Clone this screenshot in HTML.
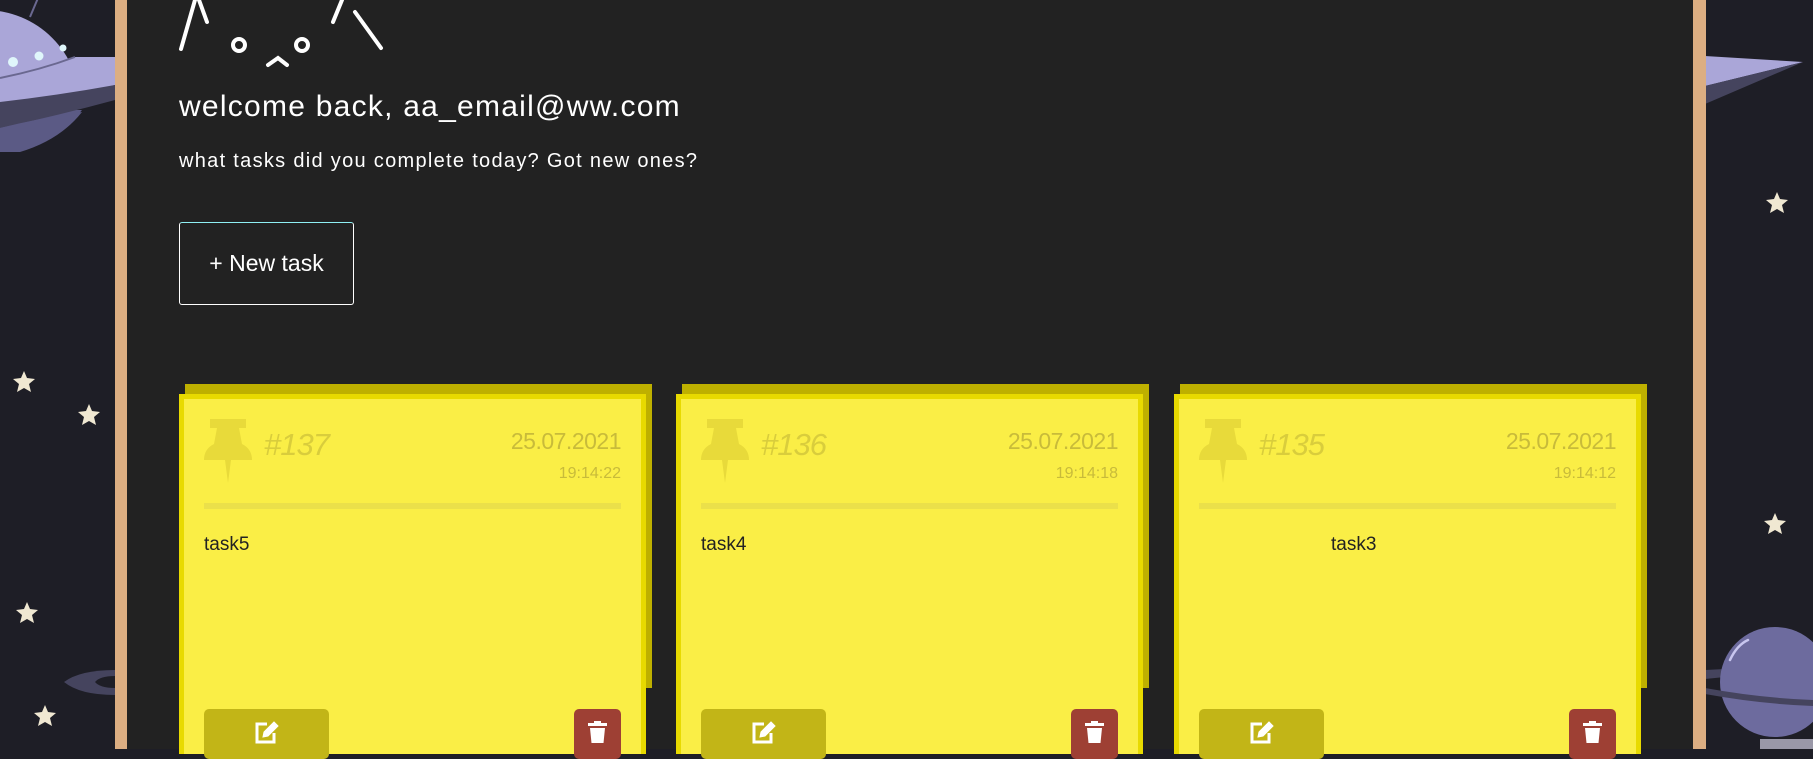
<!DOCTYPE html>
<html><head><meta charset="utf-8">
<style>
*{margin:0;padding:0;box-sizing:border-box}
html,body{width:1813px;height:749px;overflow:hidden;background:#1e1e26;font-family:"Liberation Sans",sans-serif}
.abs{position:absolute}
.main{position:absolute;left:115px;top:0;width:1591px;height:749px;background:#222222;border-left:12px solid #dcae82;border-right:13px solid #dcae82}
.card{position:absolute;top:394px;width:467px;height:360px;background:#faee46;border:5px solid #e8da00;border-bottom:none}
.back{position:absolute;top:384px;width:467px;height:304px;background:#beb000}
.num{position:absolute;left:80px;top:28px;font-size:31px;font-style:italic;color:#d9cd3c;letter-spacing:-1px}
.date{position:absolute;right:20px;top:29px;font-size:23px;color:#c8bb3a;letter-spacing:-0.5px}
.time{position:absolute;right:20px;top:66px;font-size:16px;color:#c8bb3a}
.div{position:absolute;left:20px;right:20px;top:104px;height:6px;background:#ebe04a}
.txt{position:absolute;top:135px;font-size:19px;color:#222}
.edit{position:absolute;left:20px;top:310px;width:125px;height:50px;background:#c2b517;border-radius:5px}
.del{position:absolute;right:20px;top:310px;width:47px;height:50px;background:#9e4034;border-radius:5px}
</style></head><body>
<svg class="abs" style="left:0;top:0" width="1813" height="749">
<defs><clipPath id="top"><rect x="-50" y="-10" width="200" height="95"/></clipPath></defs>
<!-- UFO -->
<line x1="30" y1="17" x2="38" y2="-2" stroke="#6a6890" stroke-width="2"/>
<path d="M0 150 Q60 140 82 110 L0 110 Z" fill="#5b5a85"/>
<circle cx="-15" cy="105" r="95" fill="#aaa6d8" clip-path="url(#top)"/>
<path d="M-10 80 L75 57 L115 57 L115 85 Q60 100 0 112 Z" fill="#aaa6d8"/>
<path d="M0 78 Q40 70 75 57" stroke="#6a6890" stroke-width="2" fill="none"/>
<circle cx="13" cy="62" r="5" fill="#dff6fb"/><circle cx="39" cy="56" r="4.5" fill="#dff6fb"/><circle cx="63" cy="48" r="3.5" fill="#dff6fb"/>
<path d="M0 102 Q60 95 115 85 L115 100 Q60 115 0 128 Z" fill="#45445e"/>
<path d="M0 128 Q40 118 82 112 Q60 140 20 152 L0 152 Z" fill="#5b5a85"/>
<!-- left stars / ring -->
<g fill="#f0e8d2">
<polygon points="24,371 27,378 35,379 29,384 31,392 24,388 17,392 19,384 13,379 21,378"/>
<polygon points="89,404 92,411 100,412 94,417 96,425 89,421 82,425 84,417 78,412 86,411"/>
<polygon points="27,602 30,609 38,610 32,615 34,623 27,619 20,623 22,615 16,610 24,609"/>
<polygon points="45,705 48,712 56,713 50,718 52,726 45,722 38,726 40,718 34,713 42,712"/>
<polygon points="1777,192 1780,199 1788,200 1782,205 1784,213 1777,209 1770,213 1772,205 1766,200 1774,199"/>
<polygon points="1775,513 1778,520 1786,521 1780,526 1782,534 1775,530 1768,534 1770,526 1764,521 1772,520"/>
</g>
<path d="M64 682 Q80 670 115 670 L115 695 Q80 695 64 682 Z" fill="#45445e"/>
<path d="M95 682 Q100 676 115 676 L115 688 Q100 688 95 682 Z" fill="#1e1e26"/>
<!-- right cone -->
<polygon points="1705,56 1803,62 1705,86" fill="#aaa6d8"/>
<polygon points="1705,86 1803,62 1705,104" fill="#45445e"/>
<!-- planet -->
<path d="M1705 670 L1725 669 L1725 677 L1705 679 Z" fill="#45445e"/>
<circle cx="1775" cy="682" r="55" fill="#6d6b9e"/>
<path d="M1705 688 Q1760 698 1813 700 L1813 706 Q1760 704 1705 694 Z" fill="#45445e"/>
<path d="M1730 660 Q1737 645 1748 640" stroke="#c8c6ef" stroke-width="2.5" fill="none" stroke-linecap="round"/>
<rect x="1760" y="739" width="53" height="10" fill="#9a98a8"/>
</svg>
<div class="main"></div>
<svg class="abs" style="left:170px;top:0" width="240" height="110" fill="none" stroke="#fff" stroke-width="4" stroke-linecap="round">
<line x1="11" y1="49" x2="25" y2="0"/><line x1="29" y1="0" x2="37" y2="22"/>
<line x1="163" y1="22" x2="172" y2="0"/><line x1="185" y1="12" x2="211" y2="48"/>
<circle cx="69" cy="45" r="6"/><circle cx="132" cy="45" r="6"/>
<path d="M98 65 L108 58 L117 65"/>
</svg>
<div class="abs" style="left:179px;top:92px;font-size:30px;line-height:1;color:#fff;letter-spacing:1.25px;white-space:nowrap">welcome back, aa_email@ww.com</div>
<div class="abs" style="left:179px;top:151px;font-size:20px;line-height:1;color:#fff;letter-spacing:1.3px;white-space:nowrap">what tasks did you complete today? Got new ones?</div>
<div class="abs" style="left:179px;top:222px;width:175px;height:83px;border:1px solid #fff;border-top:1.5px solid #8ff0f4;border-radius:3px;color:#fff;font-size:23px;line-height:80px;text-align:center">+ New task</div>

<div class="back" style="left:185px"></div>
<div class="back" style="left:682px"></div>
<div class="back" style="left:1180px"></div>

<div class="card" style="left:179px">
<svg class="abs" style="left:20px;top:20px" width="48" height="64"><path d="M6 0 H42 V9 H35 L38 25 Q48 30 48 41 H27 L24 64 L21 41 H0 Q0 30 10 25 L13 9 H6 Z" fill="#e8da3a"/></svg>
<div class="num">#137</div><div class="date">25.07.2021</div><div class="time">19:14:22</div>
<div class="div"></div><div class="txt" style="left:20px">task5</div>
<div class="edit"><svg class="abs" style="left:50px;top:12px" width="26" height="24" fill="none" stroke="#fff" stroke-width="3"><path d="M13 3 H3 V21 H20 V12"/><path d="M9 16 L10 11 L20 1 L24 5 L14 15 Z" fill="#fff" stroke-width="1"/></svg></div>
<div class="del"><svg class="abs" style="left:14px;top:12px" width="19" height="22" fill="#fff"><rect x="0" y="2" width="19" height="3"/><rect x="6" y="0" width="7" height="3"/><path d="M2 7 H17 L15.5 22 H3.5 Z"/></svg></div>
</div>

<div class="card" style="left:676px">
<svg class="abs" style="left:20px;top:20px" width="48" height="64"><path d="M6 0 H42 V9 H35 L38 25 Q48 30 48 41 H27 L24 64 L21 41 H0 Q0 30 10 25 L13 9 H6 Z" fill="#e8da3a"/></svg>
<div class="num">#136</div><div class="date">25.07.2021</div><div class="time">19:14:18</div>
<div class="div"></div><div class="txt" style="left:20px">task4</div>
<div class="edit"><svg class="abs" style="left:50px;top:12px" width="26" height="24" fill="none" stroke="#fff" stroke-width="3"><path d="M13 3 H3 V21 H20 V12"/><path d="M9 16 L10 11 L20 1 L24 5 L14 15 Z" fill="#fff" stroke-width="1"/></svg></div>
<div class="del"><svg class="abs" style="left:14px;top:12px" width="19" height="22" fill="#fff"><rect x="0" y="2" width="19" height="3"/><rect x="6" y="0" width="7" height="3"/><path d="M2 7 H17 L15.5 22 H3.5 Z"/></svg></div>
</div>

<div class="card" style="left:1174px">
<svg class="abs" style="left:20px;top:20px" width="48" height="64"><path d="M6 0 H42 V9 H35 L38 25 Q48 30 48 41 H27 L24 64 L21 41 H0 Q0 30 10 25 L13 9 H6 Z" fill="#e8da3a"/></svg>
<div class="num">#135</div><div class="date">25.07.2021</div><div class="time">19:14:12</div>
<div class="div"></div><div class="txt" style="left:152px">task3</div>
<div class="edit"><svg class="abs" style="left:50px;top:12px" width="26" height="24" fill="none" stroke="#fff" stroke-width="3"><path d="M13 3 H3 V21 H20 V12"/><path d="M9 16 L10 11 L20 1 L24 5 L14 15 Z" fill="#fff" stroke-width="1"/></svg></div>
<div class="del"><svg class="abs" style="left:14px;top:12px" width="19" height="22" fill="#fff"><rect x="0" y="2" width="19" height="3"/><rect x="6" y="0" width="7" height="3"/><path d="M2 7 H17 L15.5 22 H3.5 Z"/></svg></div>
</div>
</body></html>
